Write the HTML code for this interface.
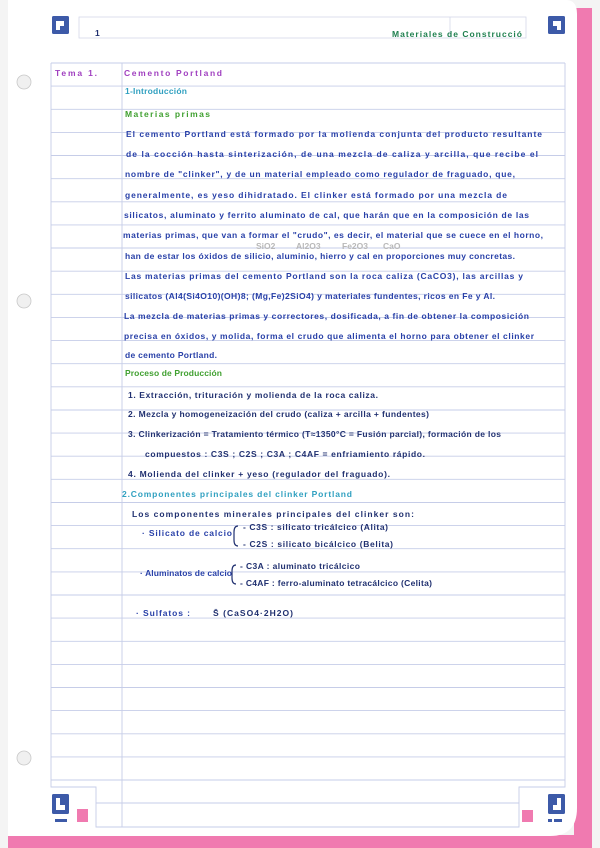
<!DOCTYPE html>
<html><head><meta charset="utf-8"><style>
html,body{margin:0;padding:0;background:#fff}
svg{display:block}
text{font-family:"Liberation Sans",sans-serif;font-size:8.5px;font-weight:bold}
</style></head><body>
<svg width="600" height="848" viewBox="0 0 600 848" xmlns="http://www.w3.org/2000/svg">
<rect width="600" height="848" fill="#f4f4f4"/>
<rect x="8" y="835" width="584" height="13" fill="#f07ab0"/>
<rect x="574" y="8" width="18" height="840" fill="#f07ab0"/>
<path d="M8 0 H566 Q577 0 577 14 V808 Q577 836 550 836 H8 Z" fill="#fff"/>
<!-- header box -->
<rect x="79" y="17" width="447" height="21" fill="none" stroke="#d4d8ea" stroke-width="0.8"/>
<line x1="450" y1="17" x2="450" y2="38" stroke="#d4d8ea" stroke-width="0.8"/>
<!-- ruled -->
<g stroke="#c6cde8" stroke-width="0.9">
<line x1="51" y1="63.0" x2="565" y2="63.0"/><line x1="51" y1="86.1" x2="565" y2="86.1"/><line x1="51" y1="109.3" x2="565" y2="109.3"/><line x1="51" y1="132.4" x2="565" y2="132.4"/><line x1="51" y1="155.5" x2="565" y2="155.5"/><line x1="51" y1="178.7" x2="565" y2="178.7"/><line x1="51" y1="201.8" x2="565" y2="201.8"/><line x1="51" y1="224.9" x2="565" y2="224.9"/><line x1="51" y1="248.0" x2="565" y2="248.0"/><line x1="51" y1="271.2" x2="565" y2="271.2"/><line x1="51" y1="294.3" x2="565" y2="294.3"/><line x1="51" y1="317.4" x2="565" y2="317.4"/><line x1="51" y1="340.6" x2="565" y2="340.6"/><line x1="51" y1="363.7" x2="565" y2="363.7"/><line x1="51" y1="386.8" x2="565" y2="386.8"/><line x1="51" y1="410.0" x2="565" y2="410.0"/><line x1="51" y1="433.1" x2="565" y2="433.1"/><line x1="51" y1="456.2" x2="565" y2="456.2"/><line x1="51" y1="479.3" x2="565" y2="479.3"/><line x1="51" y1="502.5" x2="565" y2="502.5"/><line x1="51" y1="525.6" x2="565" y2="525.6"/><line x1="51" y1="548.7" x2="565" y2="548.7"/><line x1="51" y1="571.9" x2="565" y2="571.9"/><line x1="51" y1="595.0" x2="565" y2="595.0"/><line x1="51" y1="618.1" x2="565" y2="618.1"/><line x1="51" y1="641.3" x2="565" y2="641.3"/><line x1="51" y1="664.4" x2="565" y2="664.4"/><line x1="51" y1="687.5" x2="565" y2="687.5"/><line x1="51" y1="710.6" x2="565" y2="710.6"/><line x1="51" y1="733.8" x2="565" y2="733.8"/><line x1="51" y1="756.9" x2="565" y2="756.9"/><line x1="51" y1="780.0" x2="565" y2="780.0"/>
<line x1="51" y1="63" x2="51" y2="780"/><line x1="565" y1="63" x2="565" y2="780"/>
<line x1="122" y1="63" x2="122" y2="827"/>
<path d="M51 780 V787 H96 V827 H519 V787 H565 V780" fill="none"/>
<line x1="96" y1="803" x2="519" y2="803"/>
</g>
<!-- holes -->
<g fill="#f0f0f0" stroke="#c8c8c8" stroke-width="0.8">
<circle cx="24" cy="82" r="7"/><circle cx="24" cy="301" r="7"/><circle cx="24" cy="758" r="7"/>
</g>
<!-- corner icons -->
<g fill="#3d5aa8">
<rect x="52" y="16" width="17" height="18" rx="1.5"/><rect x="548" y="16" width="17" height="18" rx="1.5"/>
<rect x="52" y="794" width="17" height="20" rx="1.5"/><rect x="548" y="794" width="17" height="20" rx="1.5"/>
<rect x="55" y="819" width="12" height="3"/><rect x="548" y="819" width="4" height="3"/><rect x="554" y="819" width="8" height="3"/>
</g>
<g fill="#fff">
<path d="M56 21 H64 V26 H60 V30 H56Z"/><path d="M553 21 H561 V30 H557 V26 H553Z"/>
<path d="M56 798 H60 V805 H65 V810 H56Z"/><path d="M557 798 H561 V810 H553 V805 H557Z"/>
</g>
<rect x="77" y="809" width="11" height="13" fill="#f07ab0"/><rect x="522" y="810" width="11" height="12" fill="#f07ab0"/>
<!-- text -->
<text x="95" y="36" fill="#203070">1</text>
<text x="392" y="37" fill="#208050" textLength="130">Materiales de Construcció</text>
<text x="55" y="76" fill="#a040c0" font-size="10" textLength="42">Tema 1.</text>
<text x="124" y="76" fill="#a040c0" font-size="10" textLength="98">Cemento Portland</text>
<text x="125" y="94" fill="#30a0c0" textLength="62">1-Introducción</text>
<text x="125" y="117" fill="#40a030" textLength="85">Materias primas</text>
<g fill="#2840a8">
<text x="126" y="137" textLength="416">El cemento Portland está formado por la molienda conjunta del producto resultante</text>
<text x="126" y="157" textLength="412">de la cocción hasta sinterización, de una mezcla de caliza y arcilla, que recibe el</text>
<text x="125" y="177" textLength="390">nombre de "clinker", y de un material empleado como regulador de fraguado, que,</text>
<text x="125" y="198" textLength="382">generalmente, es yeso dihidratado. El clinker está formado por una mezcla de</text>
<text x="124" y="218" textLength="405">silicatos, aluminato y ferrito aluminato de cal, que harán que en la composición de las</text>
<text x="123" y="238" textLength="420">materias primas, que van a formar el "crudo", es decir, el material que se cuece en el horno,</text>
<text x="125" y="259" textLength="390">han de estar los óxidos de silicio, aluminio, hierro y cal en proporciones muy concretas.</text>
<text x="125" y="279" textLength="398">Las materias primas del cemento Portland son la roca caliza (CaCO3), las arcillas y</text>
<text x="125" y="299" textLength="370">silicatos (Al4(Si4O10)(OH)8; (Mg,Fe)2SiO4) y materiales fundentes, ricos en Fe y Al.</text>
<text x="124" y="319" textLength="405">La mezcla de materias primas y correctores, dosificada, a fin de obtener la composición</text>
<text x="124" y="339" textLength="410">precisa en óxidos, y molida, forma el crudo que alimenta el horno para obtener el clinker</text>
<text x="125" y="358" textLength="92">de cemento Portland.</text>
</g>
<g fill="#b8b8b8" font-size="5" font-weight="normal"><text x="256" y="249">SiO2</text><text x="296" y="249">Al2O3</text><text x="342" y="249">Fe2O3</text><text x="383" y="249">CaO</text></g>
<text x="125" y="376" fill="#40a030" textLength="97">Proceso de Producción</text>
<g fill="#203070">
<text x="128" y="398" textLength="250">1. Extracción, trituración y molienda de la roca caliza.</text>
<text x="128" y="417" textLength="301">2. Mezcla y homogeneización del crudo (caliza + arcilla + fundentes)</text>
<text x="128" y="437" textLength="373">3. Clinkerización = Tratamiento térmico (T≈1350°C = Fusión parcial), formación de los</text>
<text x="145" y="457" textLength="280">compuestos : C3S ; C2S ; C3A ; C4AF = enfriamiento rápido.</text>
<text x="128" y="477" textLength="262">4. Molienda del clinker + yeso (regulador del fraguado).</text>
<text x="122" y="497" fill="#30a0c0" textLength="230">2.Componentes principales del clinker Portland</text>
<text x="132" y="517" textLength="282">Los componentes minerales principales del clinker son:</text>
<text x="142" y="536" fill="#2840a8" textLength="90">· Silicato de calcio</text>
<text x="243" y="530" textLength="145">- C3S : silicato tricálcico (Alita)</text>
<text x="243" y="547" textLength="150">- C2S : silicato bicálcico (Belita)</text>
<text x="140" y="576" fill="#2840a8" textLength="92">· Aluminatos de calcio</text>
<text x="240" y="569" textLength="120">- C3A : aluminato tricálcico</text>
<text x="240" y="586" textLength="192">- C4AF : ferro-aluminato tetracálcico (Celita)</text>
<text x="136" y="616" fill="#2840a8" textLength="54">· Sulfatos :</text>
<text x="213" y="616" textLength="80">S̄ (CaSO4·2H2O)</text>
</g>
<g fill="none" stroke="#203070" stroke-width="1.2">
<path d="M238 526 Q234 526 234 532 V540 Q234 546 238 546"/>
<path d="M236 565 Q232 565 232 571 V578 Q232 584 236 584"/>
</g>
</svg>
</body></html>
